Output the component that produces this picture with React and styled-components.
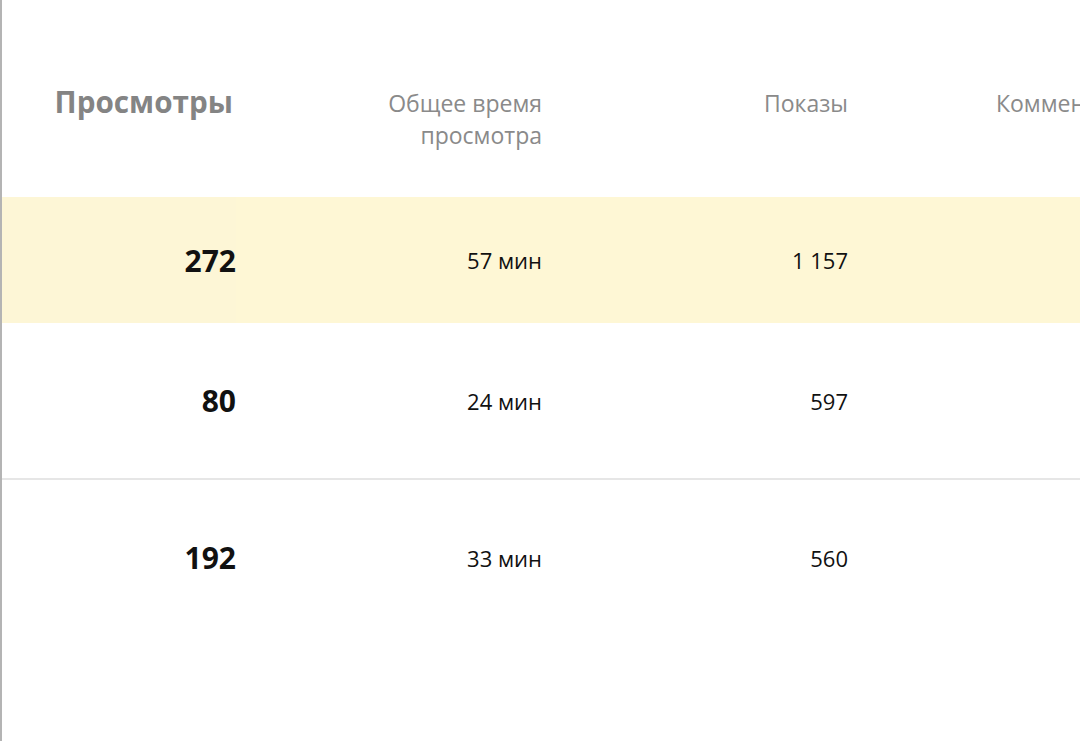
import styled, { createGlobalStyle } from "styled-components"

const Global = createGlobalStyle`
    html, body {
        margin: 0;
        padding: 0;
        background: #fff;
        overflow: hidden;
    }
    body {
        font-family: "Open Sans", "Noto Sans", sans-serif;
    }
`

const Page = styled.div`
    width: 1080px;
    height: 741px;
    overflow: hidden;
    border-left: 2px solid #b4b4b4;
    box-sizing: border-box;
`

const Grid = styled.div`
    display: grid;
    grid-template-columns: 234px 306px 306px 306px;
`

const HeadCell = styled.div`
    height: 197px;
    box-sizing: border-box;
    padding-top: ${p => (p.$main ? "83px" : "87px")};
    padding-left: ${p => p.$indent || 0}px;
    padding-right: ${p => (p.$main ? "3px" : "0")};
    text-align: ${p => (p.$indent ? "left" : "right")};
    white-space: nowrap;
    color: ${p => (p.$main ? "#848484" : "#8a8a8a")};
    font-size: ${p => (p.$main ? "29.7px" : "23px")};
    font-weight: ${p => (p.$main ? 700 : 400)};
    line-height: ${p => (p.$main ? "38px" : "32px")};
`

const Cell = styled.div`
    height: ${p => p.$h}px;
    display: flex;
    align-items: center;
    justify-content: flex-end;
    white-space: nowrap;
    color: #111;
    font-size: ${p => (p.$main ? "30px" : "22px")};
    font-weight: ${p => (p.$main ? 700 : 400)};
    background: ${p => (p.$hl ? (p.$main ? "#fdf6d6" : "#fef7d5") : "#fff")};
    border-bottom: ${p => (p.$divider ? "2px solid #e6e6e6" : "none")};
    box-sizing: border-box;
`

const headers = [
    { label: "Просмотры", main: true },
    { label: ["Общее время", "просмотра"] },
    { label: "Показы" },
    { label: "Комментарии", indent: 148 },
]

const rows = [
    { values: ["272", "57 мин", "1 157", ""], h: 126, hl: true },
    { values: ["80", "24 мин", "597", ""], h: 157, divider: true },
    { values: ["192", "33 мин", "560", ""], h: 155 },
]

const App = () => {
    return (
        <>
            <Global />
            <Page>
                <Grid>
                    {headers.map((h, i) => (
                        <HeadCell key={i} $main={h.main} $indent={h.indent}>
                            {Array.isArray(h.label)
                                ? h.label.map((l, j) => <div key={j}>{l}</div>)
                                : h.label}
                        </HeadCell>
                    ))}
                    {rows.map((r, i) =>
                        r.values.map((v, j) => (
                            <Cell key={i + "-" + j} $h={r.h} $main={j === 0} $hl={r.hl} $divider={r.divider}>
                                {v}
                            </Cell>
                        ))
                    )}
                </Grid>
            </Page>
        </>
    )
}

export default App
